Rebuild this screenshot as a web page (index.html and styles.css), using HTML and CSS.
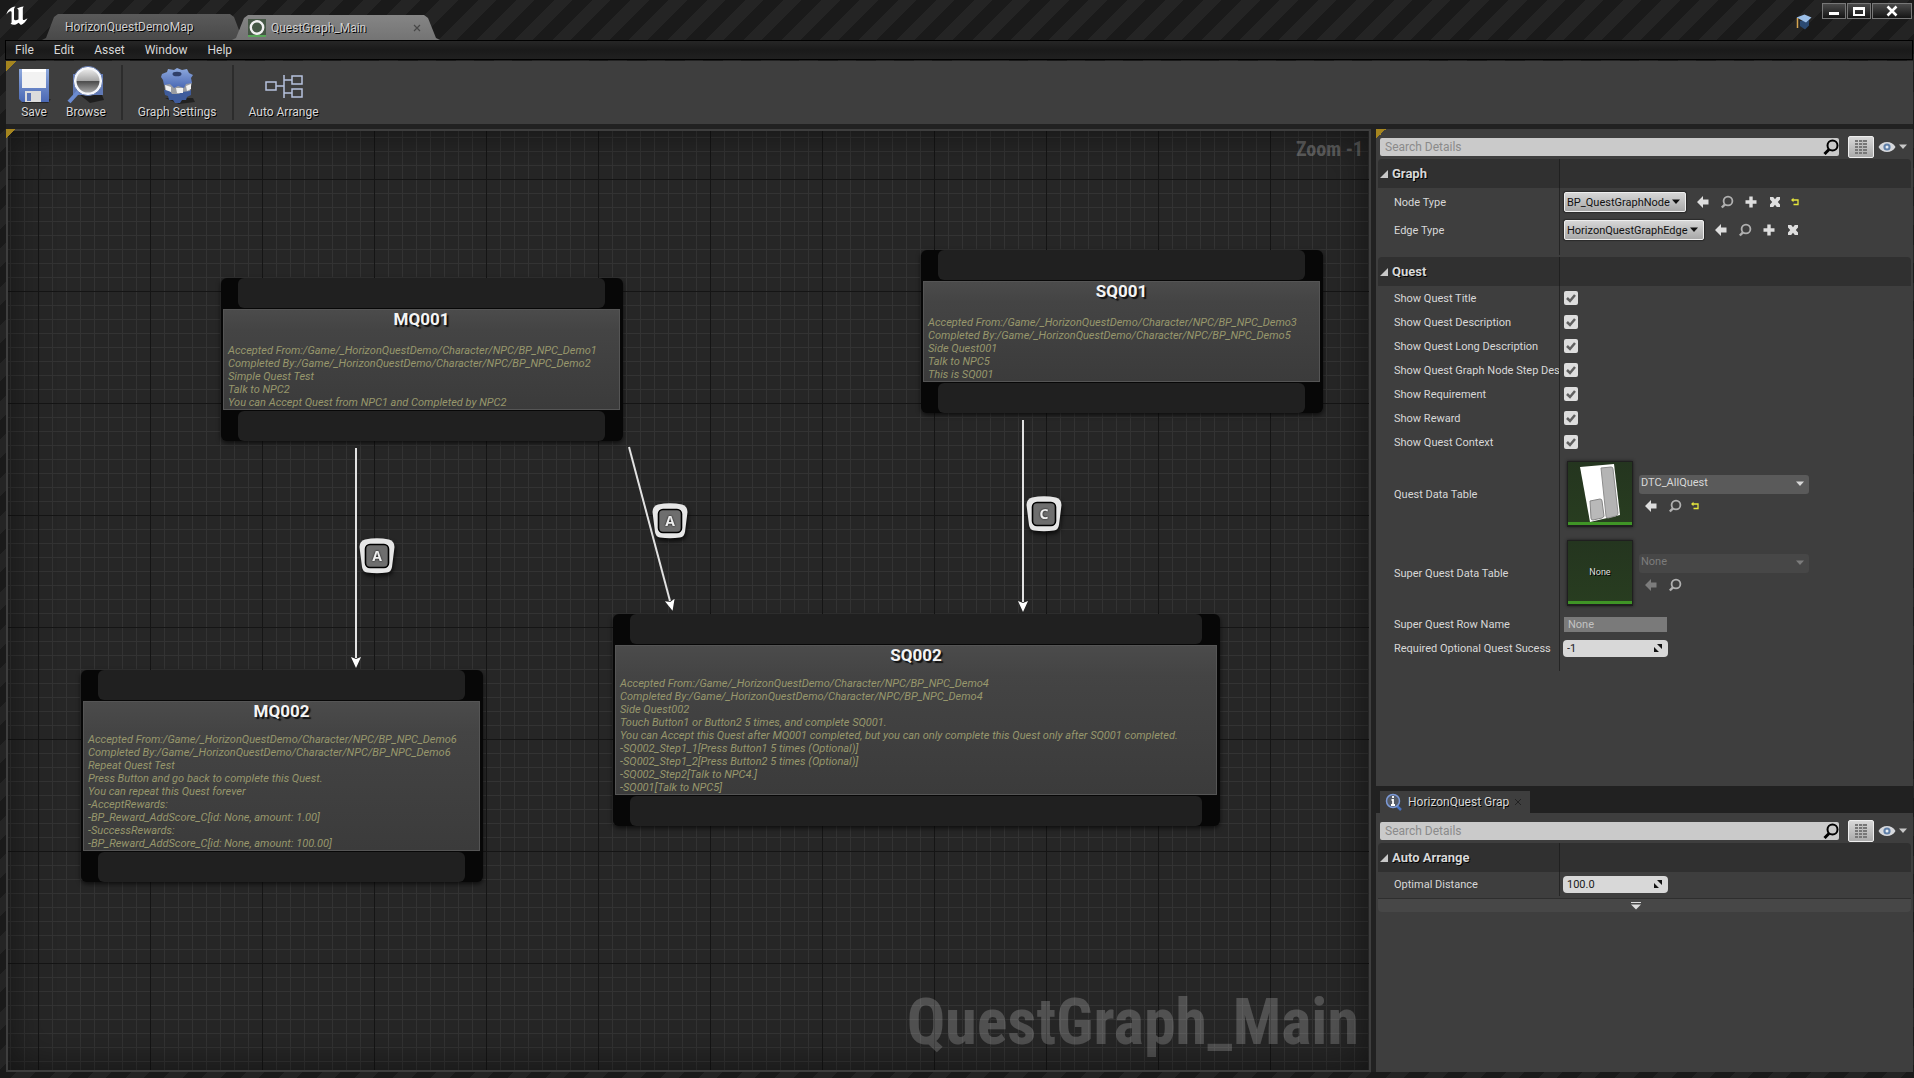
FILE: index.html
```html
<!DOCTYPE html>
<html lang="en">
<head>
<meta charset="utf-8">
<title>QuestGraph_Main</title>
<link rel="stylesheet" href="styles.css">
</head>
<body>
<svg class="defs" aria-hidden="true">
  <defs>
    <linearGradient id="blue" x1="0" y1="0" x2="0" y2="1"><stop offset="0" stop-color="#8ea9dd"/><stop offset="1" stop-color="#4a68b4"/></linearGradient>
    <linearGradient id="steel" x1="0" y1="0" x2="1" y2="1"><stop offset="0" stop-color="#ffffff"/><stop offset="1" stop-color="#8f9094"/></linearGradient>
    <linearGradient id="lens" x1="0" y1="0" x2="0" y2="1"><stop offset="0" stop-color="#f0f0f0"/><stop offset=".5" stop-color="#a5a5a5"/><stop offset=".52" stop-color="#4c4c4c"/><stop offset="1" stop-color="#b4b4b4"/></linearGradient>
    <marker id="arrow" markerUnits="userSpaceOnUse" markerWidth="12" markerHeight="12" refX="1" refY="6" orient="auto"><path d="M0 1 11 6 0 11 2 6Z" fill="#fff"/></marker>
  </defs>
  <symbol id="i-use" viewBox="0 0 14 14"><path d="M1 7 7 1v3.500h5.500v5H7V13Z" fill="currentColor"/></symbol>
  <symbol id="i-find" viewBox="0 0 14 14"><circle cx="8" cy="6" r="4.400" fill="none" stroke="currentColor" stroke-width="1.800"/><path d="M5 9.300 1.800 12.500" stroke="currentColor" stroke-width="2.400"/></symbol>
  <symbol id="i-add" viewBox="0 0 14 14"><path d="M5.300 1.500h3.400v3.800h3.800v3.400H8.700v3.800H5.300V8.700H1.500V5.300h3.800Z" fill="currentColor"/></symbol>
  <symbol id="i-clear" viewBox="0 0 14 14"><path d="M2 2h3.200L7 4.300 8.800 2H12v2.600L9.800 7 12 9.400V12H8.800L7 9.700 5.200 12H2V9.400L4.200 7 2 4.600Z" fill="currentColor"/></symbol>
  <symbol id="i-reset" viewBox="0 0 14 14"><path d="M4.500 5H10v4.500H5.500" fill="none" stroke="#e6e63c" stroke-width="1.300"/><path d="M3 5 5.500 2.800v4.400Z" fill="#e6e63c"/></symbol>
  <symbol id="i-down" viewBox="0 0 10 6"><path d="M1 0.500h8L5 5Z" fill="currentColor"/></symbol>
  <symbol id="i-open" viewBox="0 0 8 8"><path d="M8 0v8H0Z" fill="#c8c8c8"/></symbol>
  <symbol id="i-search" viewBox="0 0 16 16"><circle cx="9.500" cy="6.500" r="5" fill="none" stroke="#000" stroke-width="2"/><path d="M6 10.500 1.500 15" stroke="#000" stroke-width="3"/></symbol>
  <symbol id="i-grid" viewBox="0 0 14 16"><path d="M1 2h3M5 2h8M1 5h3M5 5h8M1 8h3M5 8h8M1 11h3M5 11h8M1 14h3M5 14h8" stroke="#777" stroke-width="2"/><path d="M8.500 1v14" stroke="#b5b5b5" stroke-width="1"/></symbol>
  <symbol id="i-eye" viewBox="0 0 18 12"><path d="M0.500 6C4-.6 14-.6 17.500 6 14 12.600 4 12.600.5 6Z" fill="#d6d8dc"/><circle cx="9" cy="6" r="3.600" fill="#5f7fa8"/><circle cx="9" cy="6" r="1.500" fill="#e8eef5"/></symbol>
  <symbol id="i-spin" viewBox="0 0 10 10"><path d="M4 1h5v5ZM1 4v5h5Z" fill="#111"/></symbol>
  <symbol id="key" viewBox="0 0 36 36"><path d="M6 1.500Q18-.8 30 1.500 35.500 3 35.500 9L33 29q-.8 5-5 5.600-10 1.200-20 0-4.200-.6-5-5.600L.5 9Q.5 3 6 1.500Z" fill="#e6e6e6"/><rect x="6.500" y="6.500" width="23" height="23" rx="4.500" fill="#6e6e6e" stroke="#000" stroke-width="1.600"/></symbol>
</svg>

<header class="titlebar">
  <svg class="logo" viewBox="0 0 24 20" role="img" aria-label="Unreal"><path d="M0.500 8.500C1.500 4 5 1.200 9.500.6 8 2 8 3 8 4.500V13c0 1.400 2.500 2 4.500.2V4.500c0-1.200-.6-1.700-1.800-1.500C12.500 1.500 15 .8 17.800.6c-.9.900-1 1.900-1 3v9.200c0 1.700 1.400 1.700 4.700-.6-1.500 3.500-4 5.500-6.600 6.900L12.600 16.800c-2.500 2.300-5.600 2.700-8.300.8 1-.2 1.300-.9 1.300-1.900V6.500C5.600 5.300 4.600 4.800 3.500 5.500 2.300 6.200 1.300 7.200.5 8.500Z" fill="#fff"/></svg>
  <nav class="tabs" aria-label="Open editors">
    <button class="tab">HorizonQuestDemoMap</button>
    <button class="tab active"><svg width="18" height="18" viewBox="0 0 18 18"><path d="M0 0h18v18H0Z" fill="#455745"/><path d="M0 17h18" stroke="#5fbf5f" stroke-width="1.500"/><circle cx="9" cy="8.500" r="6.200" fill="none" stroke="#f0f0f0" stroke-width="2.400"/></svg><span>QuestGraph_Main</span><svg class="tab-close" width="8" height="8" viewBox="0 0 8 8"><path d="m1 1 6 6M7 1 1 7" stroke="#474747" stroke-width="1.200"/></svg></button>
  </nav>
  <svg class="tutorial" width="18" height="18" viewBox="0 0 18 18"><path d="M5 8v5l5 3.500 4-4V7Z" fill="#2b4a72"/><path d="m1.500 4.500 8-3L16.500 4.500 11 9.500Z" fill="#9cbfe8"/><path d="M2.500 5v10" stroke="#d6a550" stroke-width="1.500"/></svg>
  <div class="window-buttons">
    <button aria-label="Minimize"><svg width="12" height="12" viewBox="0 0 12 12"><path d="M1 8.500h10" stroke="#fff" stroke-width="3"/></svg></button>
    <button aria-label="Maximize"><svg width="12" height="12" viewBox="0 0 12 12"><path d="M0 2h12v9H0Zm2 3v4h8V5Z" fill="#fff" fill-rule="evenodd"/></svg></button>
    <button class="wide" aria-label="Close"><svg width="12" height="12" viewBox="0 0 12 12"><path d="m1.500 1.500 9 9m0-9-9 9" stroke="#fff" stroke-width="2.600"/></svg></button>
  </div>
</header>

<nav class="menubar" aria-label="Main menu">
  <button>File</button><button>Edit</button><button>Asset</button><button>Window</button><button>Help</button>
</nav>

<div class="toolbar corner">
  <button><svg viewBox="0 0 40 40"><path d="M8 34h29l-3 4H8Z" fill="#1c1c1c" opacity=".7"/><path d="M5 4h30v33H8l-3-3Z" fill="url(#blue)"/><path d="M8 4h24v19H8Z" fill="#f2f2f2"/><path d="M8 4h24v3H8Z" fill="#fff"/><path d="M11 26h16v11H11Z" fill="#dcdcdc"/><path d="M13 28h4v8h-4Z" fill="#5a74b6"/></svg>Save</button>
  <button><svg viewBox="0 0 40 40"><path d="M14 30h22l2 5-14 3Z" fill="#161616" opacity=".8"/><path d="M7 9h30v21H7Z" fill="#6079b5"/><path d="m13 26-10 11" stroke="#6b8bd0" stroke-width="4"/><circle cx="22" cy="16" r="13" fill="url(#lens)" stroke="#f4f6fa" stroke-width="3"/><circle cx="22" cy="16" r="14.600" fill="none" stroke="#6278ad"/></svg>Browse</button>
  <i class="separator"></i>
  <button><svg viewBox="0 0 40 40"><path d="M8 33h28l2 4-16 2Z" fill="#151515" opacity=".7"/><path d="m7 25 1 5 3 1 1 4 4 0 2 3h5l2-3 4 0 1-3 4-2 0-5Z" fill="#3f5c9c"/><path d="m7 17 1 8 5 1 2 3 7 0 3-2 8-1 2-9Z" fill="#9a9ca1"/><path d="m8 20 6 2 0 5-5-2Zm11 3h7v5h-6Zm10-2 5-2v5l-4 2Z" fill="#f1f1f1"/><path d="m5 9 5-2 1-3 6 1 3-2 5 2 5-1 2 4 4 2-2 3 1 5-6 1-2 4-6-2-4 2-4-4-6 1-1-5-2-3Z" fill="url(#blue)"/><ellipse cx="20" cy="9" rx="4.500" ry="2.300" fill="#303f68"/></svg>Graph Settings</button>
  <i class="separator"></i>
  <button><svg viewBox="0 0 40 40"><path d="M2 17h10v8H2Zm26-6h10v8H28Zm0 13h10v8H28ZM12 21h8m0-11v23M20 15h8M20 28h8" fill="none" stroke="#b6c2de" stroke-width="1.500"/></svg>Auto Arrange</button>
</div>

<main class="workspace">
  <section class="graph corner" aria-label="Quest graph">
    <svg class="edges" aria-hidden="true"><g stroke="#e2e2e2" stroke-width="2" fill="none">
      <path d="M348 317V527" marker-end="url(#arrow)"/>
      <path d="m621 316 41 154" marker-end="url(#arrow)"/>
      <path d="M1015 289V471" marker-end="url(#arrow)"/></g>
    </svg>
    <div class="key key-a1"><svg><use href="#key"/></svg><b>A</b></div>
    <div class="key key-a2"><svg><use href="#key"/></svg><b>A</b></div>
    <div class="key key-c"><svg><use href="#key"/></svg><b>C</b></div>

    <article class="node mq001"><div class="pin"></div>
      <div class="node-body"><h2>MQ001</h2><p>Accepted From:/Game/_HorizonQuestDemo/Character/NPC/BP_NPC_Demo1<br>Completed By:/Game/_HorizonQuestDemo/Character/NPC/BP_NPC_Demo2<br>Simple Quest Test<br>Talk to NPC2<br>You can Accept Quest from NPC1 and Completed by NPC2</p></div>
      <div class="pin"></div></article>
    <article class="node dense mq002"><div class="pin"></div>
      <div class="node-body"><h2>MQ002</h2><p>Accepted From:/Game/_HorizonQuestDemo/Character/NPC/BP_NPC_Demo6<br>Completed By:/Game/_HorizonQuestDemo/Character/NPC/BP_NPC_Demo6<br>Repeat Quest Test<br>Press Button and go back to complete this Quest.<br>You can repeat this Quest forever<br>-AcceptRewards:<br>-BP_Reward_AddScore_C[id: None, amount: 1.00]<br>-SuccessRewards:<br>-BP_Reward_AddScore_C[id: None, amount: 100.00]</p></div>
      <div class="pin"></div></article>
    <article class="node sq001"><div class="pin"></div>
      <div class="node-body"><h2>SQ001</h2><p>Accepted From:/Game/_HorizonQuestDemo/Character/NPC/BP_NPC_Demo3<br>Completed By:/Game/_HorizonQuestDemo/Character/NPC/BP_NPC_Demo5<br>Side Quest001<br>Talk to NPC5<br>This is SQ001</p></div>
      <div class="pin"></div></article>
    <article class="node dense sq002"><div class="pin"></div>
      <div class="node-body"><h2>SQ002</h2><p>Accepted From:/Game/_HorizonQuestDemo/Character/NPC/BP_NPC_Demo4<br>Completed By:/Game/_HorizonQuestDemo/Character/NPC/BP_NPC_Demo4<br>Side Quest002<br>Touch Button1 or Button2 5 times, and complete SQ001.<br>You can Accept this Quest after MQ001 completed, but you can only complete this Quest only after SQ001 completed.<br>-SQ002_Step1_1[Press Button1 5 times (Optional)]<br>-SQ002_Step1_2[Press Button2 5 times (Optional)]<br>-SQ002_Step2[Talk to NPC4.]<br>-SQ001[Talk to NPC5]</p></div>
      <div class="pin"></div></article>

    <div class="zoom-level">Zoom -1</div>
    <div class="watermark">QuestGraph_Main</div>
  </section>

  <aside class="side">
    <section class="panel details corner">
      <div class="search-row">
        <div class="search"><input type="text" placeholder="Search Details" aria-label="Search details"><svg><use href="#i-search"/></svg></div>
        <button class="matrix" aria-label="Property matrix"><svg><use href="#i-grid"/></svg></button>
        <button class="view" aria-label="View options"><svg class="eye"><use href="#i-eye"/></svg><svg class="down"><use href="#i-down"/></svg></button>
      </div>
      <section class="category">
        <h3><svg><use href="#i-open"/></svg>Graph</h3>
        <div class="row tall"><label for="node-type">Node Type</label><div class="value">
          <div class="pick light"><select id="node-type"><option>BP_QuestGraphNode</option></select><svg><use href="#i-down"/></svg></div>
          <div class="icons class-icons"><button aria-label="Use selected"><svg><use href="#i-use"/></svg></button><button class="dim" aria-label="Browse to"><svg><use href="#i-find"/></svg></button><button aria-label="Create new"><svg><use href="#i-add"/></svg></button><button aria-label="Clear"><svg><use href="#i-clear"/></svg></button><button class="reset" aria-label="Reset"><svg><use href="#i-reset"/></svg></button></div></div></div>
        <div class="row tall"><label for="edge-type">Edge Type</label><div class="value">
          <div class="pick light"><select id="edge-type"><option>HorizonQuestGraphEdge</option></select><svg><use href="#i-down"/></svg></div>
          <div class="icons class-icons"><button aria-label="Use selected"><svg><use href="#i-use"/></svg></button><button class="dim" aria-label="Browse to"><svg><use href="#i-find"/></svg></button><button aria-label="Create new"><svg><use href="#i-add"/></svg></button><button aria-label="Clear"><svg><use href="#i-clear"/></svg></button></div></div></div>
      </section>
      <section class="category">
        <h3><svg><use href="#i-open"/></svg>Quest</h3>
        <div class="row"><label for="c1">Show Quest Title</label><div class="value"><span class="check"><input type="checkbox" id="c1" checked></span></div></div>
        <div class="row"><label for="c2">Show Quest Description</label><div class="value"><span class="check"><input type="checkbox" id="c2" checked></span></div></div>
        <div class="row"><label for="c3">Show Quest Long Description</label><div class="value"><span class="check"><input type="checkbox" id="c3" checked></span></div></div>
        <div class="row"><label for="c4">Show Quest Graph Node Step Description</label><div class="value"><span class="check"><input type="checkbox" id="c4" checked></span></div></div>
        <div class="row"><label for="c5">Show Requirement</label><div class="value"><span class="check"><input type="checkbox" id="c5" checked></span></div></div>
        <div class="row"><label for="c6">Show Reward</label><div class="value"><span class="check"><input type="checkbox" id="c6" checked></span></div></div>
        <div class="row"><label for="c7">Show Quest Context</label><div class="value"><span class="check"><input type="checkbox" id="c7" checked></span></div></div>
        <div class="row asset"><label for="table">Quest Data Table</label><div class="value">
          <div class="thumb"><svg width="64" height="62" viewBox="0 0 64 62"><path d="m12 5 34-3 6 51-30 7Z" fill="#fff"/><path d="m33 6 10-1q2 0 2 2l5 44q0 2-2 3l-8 2q-2 0-2-2Z" fill="#b4b4b4" stroke="#8d8d8d"/><path d="m22 39 10-2q2 0 2 2l2 15q0 1-2 2l-9 2q-2 0-2-2Z" fill="#b9b9b9" stroke="#858585"/></svg></div>
          <div class="asset-controls"><div class="pick dark"><select id="table"><option>DTC_AllQuest</option></select><svg><use href="#i-down"/></svg></div>
          <div class="icons"><button aria-label="Use selected"><svg><use href="#i-use"/></svg></button><button class="dim" aria-label="Browse to"><svg><use href="#i-find"/></svg></button><button class="reset" aria-label="Reset"><svg><use href="#i-reset"/></svg></button></div></div></div></div>
        <div class="row asset"><label for="super-table">Super Quest Data Table</label><div class="value">
          <div class="thumb">None</div>
          <div class="asset-controls"><div class="pick dark disabled"><select id="super-table" disabled><option>None</option></select><svg><use href="#i-down"/></svg></div>
          <div class="icons"><button class="off" aria-label="Use selected"><svg><use href="#i-use"/></svg></button><button class="dim" aria-label="Browse to"><svg><use href="#i-find"/></svg></button></div></div></div></div>
        <div class="row"><label for="row-name">Super Quest Row Name</label><div class="value"><input class="text-off" id="row-name" type="text" value="None" disabled></div></div>
        <div class="row"><label for="required">Required Optional Quest Sucess</label><div class="value"><div class="spin"><input id="required" type="text" value="-1"><svg><use href="#i-spin"/></svg></div></div></div>
      </section>
    </section>

    <section class="arrange">
      <div class="tab-well"><button class="small-tab"><svg width="18" height="18" viewBox="0 0 18 18"><path d="m11 12 5 5" stroke="#4773c4" stroke-width="2.500"/><circle cx="8" cy="8" r="6.500" fill="#555b66" stroke="#7c9ad8" stroke-width="1.500"/><path d="M8 3v2M6.500 7H8v5M6 12h4" stroke="#fff" stroke-width="1.800"/></svg><span>HorizonQuest Graph</span><svg width="8" height="8" viewBox="0 0 8 8"><path d="m1 1 6 6M7 1 1 7" stroke="#222"/></svg></button></div>
      <div class="panel">
        <div class="search-row">
          <div class="search"><input type="text" placeholder="Search Details" aria-label="Search arrange settings"><svg><use href="#i-search"/></svg></div>
          <button class="matrix" aria-label="Property matrix"><svg><use href="#i-grid"/></svg></button>
          <button class="view" aria-label="View options"><svg class="eye"><use href="#i-eye"/></svg><svg class="down"><use href="#i-down"/></svg></button>
        </div>
        <section class="category compact">
          <h3><svg><use href="#i-open"/></svg>Auto Arrange</h3>
          <div class="row"><label for="distance">Optimal Distance</label><div class="value"><div class="spin"><input id="distance" type="text" value="100.0"><svg><use href="#i-spin"/></svg></div></div></div>
        </section>
        <button class="expander" aria-label="Show advanced"><svg width="10" height="8" viewBox="0 0 10 8"><path d="M0 .5h10" stroke="#ddd"/><path d="M0 2.500h10L5 7.500Z" fill="#ddd"/></svg></button>
      </div>
    </section>
  </aside>
</main>
</body>
</html>
```

FILE: styles.css
```css
* { box-sizing: border-box; }

body {
  margin: 0;
  height: 100vh;
  display: flex;
  flex-direction: column;
  padding: 0 1px 6px 6px;
  overflow: hidden;
  color: #d8d8d8;
  font: 12px/14px Roboto, "Liberation Sans", sans-serif;
  background: repeating-linear-gradient(135deg, #1a1a1a 0 14px, #242424 14px 27px);
}

button, input, select { font: inherit; color: inherit; }
button { margin: 0; padding: 0; border: 0; background: none; }
.defs { position: absolute; width: 0; height: 0; }

/* Title bar */
.titlebar { display: flex; height: 40px; flex: none; align-items: flex-start; }
.logo { width: 24px; height: 20px; margin-top: 6px; }
.tabs { display: flex; align-items: flex-end; height: 40px; margin-left: 12px; margin-right: auto; }
.tab {
  display: flex;
  align-items: center;
  width: 204px;
  height: 26px;
  padding: 0 23px;
  color: #d0d0d0;
  text-shadow: 1px 1px #000;
  background: linear-gradient(#5a5a5a, #494949);
  clip-path: polygon(0 100%, 4px 92%, 12px 12%, 16px 0, calc(100% - 16px) 0, calc(100% - 12px) 12%, calc(100% - 4px) 92%, 100% 100%);
}
.tab.active {
  width: 208px;
  height: 25px;
  gap: 5px;
  margin-left: -14px;
  padding: 0 19px 0 16px;
  background: linear-gradient(#858585, #747474);
}
.tab-close { margin-left: auto; }
.tutorial { margin: 13px 9px 0 0; }
.window-buttons { display: flex; gap: 1px; margin: 3px 1px 0 0; }
.window-buttons button {
  display: flex;
  align-items: center;
  justify-content: center;
  width: 24px;
  height: 16px;
  border: 1px solid #777;
  background: linear-gradient(#4a4a4a, #151515);
}
.window-buttons .wide { width: 40px; }

/* Menu and toolbar */
.menubar {
  display: flex;
  flex: none;
  gap: 20px;
  height: 20px;
  margin-left: -1px;
  padding-left: 9px;
  border: 1px solid #000;
  background: linear-gradient(#262626, #1a1a1a 50%, #202020);
}
.toolbar {
  display: flex;
  flex: none;
  height: 63px;
  margin-top: 1px;
  padding: 4px 5px;
  background: #3e3e3e;
}
.toolbar button {
  display: flex;
  flex-direction: column;
  align-items: center;
  padding: 0 9px;
  text-shadow: 1px 1px #000;
}
.toolbar button svg { width: 40px; height: 40px; margin: 0 -6px; }
.separator { width: 2px; margin: 0 6px; background: #2c2c2c; }

/* Yellow tab-restore triangle in a dock corner */
.corner { position: relative; }
.corner::before {
  content: "";
  position: absolute;
  z-index: 2;
  left: 0;
  top: 0;
  width: 10px;
  height: 10px;
  background: linear-gradient(135deg, #a5851f 50%, transparent 50%);
}
.graph.corner::before { left: -2px; top: -2px; }

.workspace {
  flex: 1;
  min-height: 0;
  display: flex;
  gap: 5px;
  padding-top: 5px;
  overflow: hidden;
  background: #212121;
}

/* Graph canvas */
.graph {
  flex: 1;
  min-width: 0;
  border: 2px solid #3e3e3e;
  background-color: #262626;
  background-image:
    linear-gradient(90deg, #151515 1px, transparent 1px),
    linear-gradient(#151515 1px, transparent 1px),
    linear-gradient(90deg, #333 1px, transparent 1px),
    linear-gradient(#333 1px, transparent 1px);
  background-size: 112px 112px, 112px 112px, 14px 14px, 14px 14px;
  background-position: 30px 48px, 30px 48px, 2px 6px, 2px 6px;
}
.graph::after {
  content: "";
  position: absolute;
  inset: 0;
  pointer-events: none;
  box-shadow: inset 0 0 40px #0008;
}
.edges { position: absolute; inset: 0; width: 100%; height: 100%; }
.node {
  position: absolute;
  width: 402px;
  padding: 0 3px 0 2px;
  border-radius: 6px;
  background: #070707;
  box-shadow: 0 2px 5px #000a;
}
.mq001 { left: 213px; top: 147px; }
.mq002 { left: 73px; top: 539px; }
.sq001 { left: 913px; top: 119px; }
.sq002 { left: 605px; top: 483px; width: 607px; }
.pin { height: 30px; margin: 0 15px; border-radius: 6px; background: #202020; }
.node-body {
  margin: 1px 0;
  padding: 0 4px;
  border: 1px solid #555;
  background: linear-gradient(#4b4b4b, #444 20%, #3b3b3b);
}
.node h2 {
  margin: 0 0 16px;
  color: #f4f4f4;
  font-size: 17px;
  line-height: 18px;
  text-align: center;
  text-shadow: 2px 2px 1px #111;
}
.node.dense h2 { margin-bottom: 13px; }
.node p {
  margin: 0;
  color: #97976c;
  font-size: 11px;
  font-style: italic;
  line-height: 13px;
  white-space: nowrap;
}
.key {
  position: absolute;
  display: grid;
  place-items: center;
  width: 36px;
  height: 36px;
  filter: drop-shadow(1px 3px 2px #000b);
}
.key > * { grid-area: 1 / 1; }
.key svg { width: 36px; height: 36px; }
.key b { z-index: 1; color: #eee; font: bold 14px/16px "Noto Sans", sans-serif; text-shadow: 0 0 2px #000; }
.key-a1 { left: 351px; top: 407px; }
.key-a2 { left: 644px; top: 372px; }
.key-c { left: 1018px; top: 365px; }
.zoom-level, .watermark {
  position: absolute;
  color: #fff3;
  font-family: "Roboto Condensed", Roboto, sans-serif;
  font-weight: bold;
}
.zoom-level { right: 6px; top: 6px; font-size: 20px; line-height: 24px; color: #fff4; }
.watermark { right: 10px; bottom: 12px; font-size: 64px; line-height: 70px; }

/* Side panels */
.side { width: 537px; flex: none; display: flex; flex-direction: column; gap: 5px; }
.panel { padding: 7px 2px 0; background: #3e3e3e; }
.details { flex: 655 1 0; min-height: 0; overflow: hidden; }
.arrange { flex: 283 1 0; min-height: 0; display: flex; flex-direction: column; }
.arrange .panel { flex: 1; }
.search-row { display: flex; align-items: center; height: 22px; margin-bottom: 1px; padding: 0 3px 0 2px; }
.search { flex: 1; display: grid; align-items: center; }
.search > * { grid-area: 1 / 1; }
.search input {
  width: 100%;
  height: 18px;
  padding: 0 20px 0 5px;
  border: 0;
  border-radius: 2px;
  color: #111;
  background: #cacaca;
}
.search input::placeholder { color: #8a8a8a; opacity: 1; }
.search svg { width: 16px; height: 16px; justify-self: end; }
.matrix {
  display: grid;
  place-items: center;
  width: 26px;
  height: 22px;
  margin: 0 4px 0 9px;
  border: 1px solid #eee;
  border-radius: 2px;
  background: linear-gradient(#d8d8d8, #aaa);
}
.matrix svg { width: 14px; height: 16px; }
.view { display: flex; align-items: center; gap: 2px; color: #c8c8c8; }
.eye { width: 18px; height: 12px; }
.down { width: 10px; height: 6px; }

.category {
  padding-bottom: 13px;
  background: linear-gradient(#252525, #252525) 181px 0 / 1px calc(100% - 2px) no-repeat;
}
.category.compact { padding-bottom: 2px; }
.category h3 {
  display: flex;
  align-items: center;
  gap: 4px;
  height: 29px;
  margin: 0;
  padding-left: 2px;
  border-radius: 4px 4px 0 0;
  font-size: 13px;
  text-shadow: 1px 1px #000;
  background: linear-gradient(90deg, transparent 181px, #202020 181px 182px, transparent 182px), #303030;
}
.category h3 svg { width: 8px; height: 8px; }
.row { display: grid; grid-template-columns: 181px 1fr; height: 24px; align-items: center; font-size: 11px; }
.row.tall { height: 28px; }
.row.asset { height: 79px; }
.row label { padding: 2px 0 0 16px; overflow: hidden; white-space: nowrap; }
.value { display: flex; align-items: center; padding-left: 5px; }

.check { display: grid; }
.check input {
  appearance: none;
  width: 14px;
  height: 14px;
  margin: 0;
  border-radius: 2px;
  background: #dedede;
}
.check input:checked {
  background: #dedede url("data:image/svg+xml,%3Csvg xmlns='http://www.w3.org/2000/svg' viewBox='0 0 14 14'%3E%3Cpath d='M3 7l3 3 5-6' fill='none' stroke='%23606060' stroke-width='2.500'/%3E%3C/svg%3E");
}

.pick { display: grid; align-items: center; }
.pick > * { grid-area: 1 / 1; }
.pick select { appearance: none; border: 0; outline: 0; background: none; opacity: 1; }
.pick svg { width: 10px; height: 6px; justify-self: end; margin-right: 4px; pointer-events: none; }
.pick.light { border: 1px solid #eee; border-radius: 2px; color: #111; background: linear-gradient(#d6d6d6, #a8a8a8); box-shadow: 0 0 1px 1px #2a2a2a; }
.pick.light select { height: 18px; padding: 1px 15px 0 2px; }
.pick.dark { width: 170px; height: 19px; border-radius: 3px; background: #5a5a5a; text-shadow: 1px 1px #000; }
.pick.dark select { height: 19px; padding: 0 16px 2px 2px; }
.pick.disabled { color: #7c7c7c; background: #474747; text-shadow: 1px 1px #333; }

.icons { display: flex; gap: 10px; color: #dedede; }
.icons button { display: grid; color: inherit; }
.icons svg { width: 14px; height: 14px; }
.icons .dim { color: #b0b0b0; }
.icons .off { color: #7c7c7c; }
.icons .reset { margin-left: -4px; }
.class-icons { margin-left: 10px; }

.thumb {
  display: grid;
  place-items: center;
  width: 66px;
  height: 66px;
  margin: 0 6px 0 3px;
  border: 1px solid #1f1f1f;
  border-bottom-width: 2px;
  color: #ddd;
  font-size: 9px;
  text-shadow: 1px 1px #000;
  background: linear-gradient(#3f9426, #3f9426) 0 100% / 100% 3px no-repeat, linear-gradient(#24351f, #283d20);
  box-shadow: 0 0 3px #1a1a1a;
}
.asset-controls { display: flex; flex-direction: column; gap: 5px; }
.asset-controls .icons { padding-left: 5px; }
.asset .value { height: 66px; }

.text-off { width: 103px; height: 15px; padding: 0 4px; border: 0; color: #c2c2c2; background: #7a7a7a; }
.spin { display: grid; align-items: center; width: 105px; margin-left: -1px; }
.spin > * { grid-area: 1 / 1; }
.spin input { width: 100%; height: 17px; padding: 0 18px 0 4px; border: 0; border-radius: 4px; color: #1a1a1a; background: #d8d8d8; }
.spin svg { width: 10px; height: 10px; justify-self: end; margin-right: 5px; }

.tab-well { height: 22px; padding-left: 4px; }
.small-tab { display: flex; align-items: center; width: 150px; height: 22px; padding: 0 6px 0 5px; background: #3e3e3e; text-shadow: 1px 1px #000; }
.small-tab span { width: 101px; margin: 0 5px; overflow: hidden; white-space: nowrap; }
.expander { display: flex; align-items: center; justify-content: center; width: 100%; height: 14px; padding-right: 18px; border-top: 1px solid #2e2e2e; border-radius: 0 0 4px 4px; background: #474747; }
```
